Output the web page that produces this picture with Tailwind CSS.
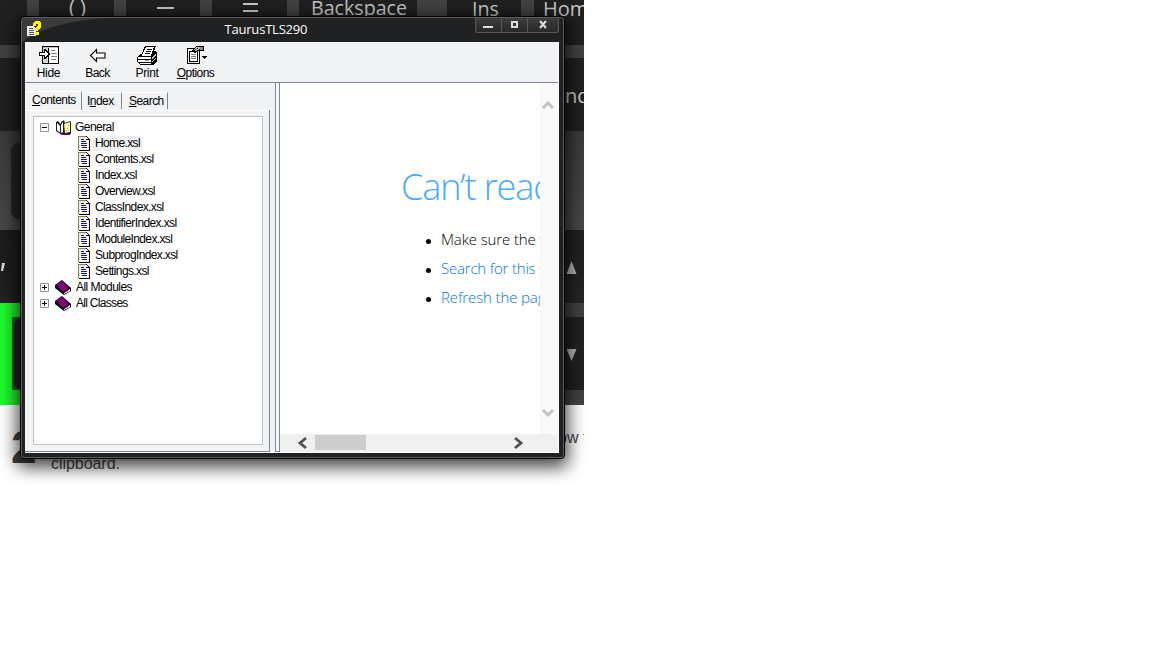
<!DOCTYPE html>
<html lang="en">
<head>
<meta charset="utf-8">
<title>TaurusTLS290</title>
<script src="https://cdn.jsdelivr.net/npm/@tailwindcss/browser@4"></script>
</head>
<body class="w-[1152px] h-[648px] overflow-hidden bg-white relative">
<svg width="0" height="0" class="absolute">
  <defs>
    <symbol id="doc" viewBox="0 0 12 15">
      <g shape-rendering="crispEdges">
      <path d="M0 0h9l3 3v12H0z" fill="#fffef0"/>
      <path d="M0 0h8v1H1v13H0z" fill="#808080"/>
      <path d="M8 0h1v1h1v1h1v1h1v12H1v-1h10V4H8z" fill="#000"/>
      <path d="M2 1h1v1H2zM4 1h1v1H4zM6 1h1v1H6zM1 3h1v1H1zM1 6h1v1H1zM1 9h1v1H1zM1 12h1v1H1zM10 5h1v1h-1zM10 8h1v1h-1zM10 11h1v1h-1z" fill="#eee05a"/>
      <path d="M3 3h3v1H3zM3 5h5v1H3zM3 7h6v1H3zM3 9h6v1H3zM4 11h5v1H4z" fill="#0000d8"/>
      <path d="M8 1h1v1h1v1H8z" fill="#fff"/>
      </g>
    </symbol>
    <symbol id="book" viewBox="0 0 16 15">
      <path d="M0 5L7 0l9 8v3l-7 4-9-7z" fill="#000"/>
      <path d="M1 5l6-4 7 7-6 4z" fill="#800080"/>
      <path d="M9 13l6-4v2l-6 3z" fill="#fff"/>
      <path d="M9 13.500l5-3" stroke="#999" stroke-width=".6"/>
    </symbol>
    <symbol id="plus" viewBox="0 0 9 9"><path d="M.5.5h8v8h-8z" fill="#fff" stroke="#919191"/><path d="M2 4h5v1H2zM4 2h1v5H4z"/></symbol>
    <symbol id="minus" viewBox="0 0 9 9"><path d="M.5.5h8v8h-8z" fill="#fff" stroke="#919191"/><path d="M2 4h5v1H2z"/></symbol>
  </defs>
</svg>

<!-- Page behind the window -->
<div class="absolute left-0 top-0 w-[584px] h-[648px] overflow-hidden">
  <svg class="absolute left-0 top-0" width="584" height="405" viewBox="0 0 584 405">
    <defs>
      <linearGradient id="key" x1="0" x2="1" y1="0" y2="1"><stop offset="0" stop-color="#1c1c1c"/><stop offset="1" stop-color="#252525"/></linearGradient>
      <linearGradient id="gap" x1="0" x2="0" y1="0" y2="1"><stop offset="0" stop-color="#3a3a3a"/><stop offset="1" stop-color="#484848"/></linearGradient>
    </defs>
    <rect width="584" height="405" fill="#424242"/>
    <path d="M0 0h27v45H0zM39 0h75v45H39zM126 0h74v45h-74zM212 0h75v45h-75zM299 0h118v45H299zM447 0h74v45h-74zM534 0h50v45h-50zM0 58h584v73H0z" fill="#202020"/>
    <rect y="131" width="584" height="99" fill="url(#gap)"/>
    <rect x="11" y="143" width="40" height="76" rx="8" fill="#232323"/>
    <rect y="230" width="584" height="73" fill="url(#key)"/>
    <rect x="500" y="317" width="84" height="73" fill="#222"/>
    <rect y="303" width="40" height="102" fill="#1ef92d"/>
    <rect x="12" y="317" width="40" height="73" fill="#225f2a"/>
    <rect x="14" y="319" width="40" height="70" rx="6" fill="#232626"/>
    <path d="M571.500 261l5 13h-10zM571.500 361l-5-12h10z" fill="#b5b5b5"/>
    <g fill="#c8c8c8" font-family="Open Sans, sans-serif" font-size="20">
      <text x="69" y="14" textLength="17">()</text>
      <text x="311" y="15" textLength="96" lengthAdjust="spacingAndGlyphs">Backspace</text>
      <text x="472" y="16" textLength="27" lengthAdjust="spacingAndGlyphs">Ins</text>
      <text x="543" y="16">Home</text>
      <text x="565" y="103">nd</text>
      <path d="M157 7h17v2h-17zM243 3h15v2h-15zM243 10h15v2h-15z"/>
    </g>
    <path d="M2 263h3l-2 8H1z" fill="#ddd"/>
  </svg>
  <div class="absolute left-[11px] top-[421px] font-['Liberation_Sans'] font-bold text-[46px] leading-[52px] text-[#444]">2</div>
  <div class="absolute left-[51px] top-[454px] font-['Liberation_Sans'] text-[16px] leading-[20px] text-[#444] tracking-[-0.05px]">clipboard.</div>
  <div class="absolute left-[558px] top-[428px] font-['Liberation_Sans'] text-[16px] leading-[20px] text-[#444] whitespace-nowrap">ow t</div>
</div>

<!-- Help window -->
<div class="absolute left-[20px] top-[16px] w-[545px] h-[443px] rounded-[4px] bg-[#202122] border border-black shadow-[0_5px_17px_3px_rgba(0,0,0,0.75)]">
  <div class="w-full h-full rounded-[3px] border border-[#5c5c5c] flex flex-col px-[3px] pb-[4px] relative overflow-hidden">
    <svg class="absolute left-0 top-0" width="90" height="24"><path d="M0 0H90Q30 2 0 24z" fill="#3b3b3b"/></svg>
    <div class="h-[24px] shrink-0 relative flex justify-center">
      <svg class="absolute left-[2px] top-[3px]" width="15" height="16" viewBox="0 0 15 16" shape-rendering="crispEdges">
        <path d="M0 5h6l3 3v7H0z" fill="#eee"/><path d="M2 7h4v1H2zM2 9h5v1H2zM2 11h5v1H2zM2 13h5v1H2z" fill="#555"/>
        <path d="M6 4V2l2-2h4l2 2v4l-3 3v1H8V7l3-2V3H9v2H6z" fill="#ffff00"/><path d="M8 11h4v3H8z" fill="#ffff00"/>
      </svg>
      <div class="-ml-[51px] mt-px font-['Open_Sans'] text-[13px] leading-[21px] text-white w-[85px] whitespace-nowrap tracking-[-0.2px]">TaurusTLS290</div>
      <div class="absolute right-[1px] -top-[2px] h-[17px] w-[84px] flex border border-t-0 border-[#5a5a5a] rounded-b-[3px] bg-linear-to-b from-[#404040] to-[#292929]">
        <span class="w-[26px] border-r border-[#5a5a5a] flex"><svg width="25" height="16"><path d="M7 10h10v2H7z" fill="#ddd"/></svg></span>
        <span class="w-[26px] border-r border-[#5a5a5a] flex"><svg width="25" height="16"><path d="M10 6h5v5h-5z" fill="none" stroke="#ddd" stroke-width="2"/></svg></span>
        <span class="flex"><svg width="30" height="16"><path d="M12 5l6 7M18 5l-6 7" stroke="#ddd" stroke-width="2"/></svg></span>
      </div>
    </div>

    <div class="flex-1 min-h-0 w-[534px] bg-[#f1f3f5] flex flex-col border-b border-r border-[#fff] text-black font-['Liberation_Sans'] text-[12px] tracking-[-0.55px] -mr-px">
      <!-- Toolbar -->
      <div class="h-[41px] shrink-0 border-b border-[#7b8792] flex pt-[3px]">
        <button class="w-[47px] flex flex-col items-center">
          <svg width="22" height="20" viewBox="38 45 22 20" shape-rendering="crispEdges">
            <path d="M42 46h17v18H42z"/><path d="M43 48h5v15h-5z" fill="#d5d5d5"/><path d="M49 48h9v15h-9z" fill="#fff"/><path d="M43 47h15v1H43z" fill="#c0c0c0"/>
            <path d="M51 50h4v1h-4zM51 53h6v1h-6zM51 56h6v1h-6zM51 59h5v1h-5z" fill="#808080"/>
            <path d="M39 52h5v-3h1l5 5-5 5h-1v-3h-5z"/><path d="M40 53h5v-2l3 3-3 3v-2h-5z" fill="#fff"/>
          </svg>
          <span class="leading-[14px] mt-px tracking-[-0.3px]">Hide</span>
        </button>
        <button class="w-[51px] flex flex-col items-center">
          <svg width="22" height="20" viewBox="87 45 22 20"><path d="M90.500 55.500l6-6v3.500h8.500v5h-8.500v3.500z" fill="#fff" stroke="#000" stroke-width="1.100"/></svg>
          <span class="leading-[14px] mt-px">Back</span>
        </button>
        <button class="w-[48px] flex flex-col items-center">
          <svg width="22" height="20" viewBox="136 45 22 20" shape-rendering="crispEdges">
            <path d="M141 55l4-9h11l-3 9z"/><path d="M142 55l4-8h8l-3 8z" fill="#fff"/>
            <path d="M147 49h5v1h-5zM146 51h5v1h-5zM145 53h5v1h-5z"/>
            <path d="M137 57l3-3h2v2h9l2-5h2l2 2v8l-4 4h-13l-3-3z"/>
            <path d="M138 57h13v2h-13zM138 60h13v2h-13zM140 63h11v1h-11z" fill="#fff"/><path d="M145 60h4v1h-4z" fill="#888"/>
            <path d="M152 57l4-4v2l-4 4zM152 61l4-4v1l-4 4z" fill="#ccc"/>
          </svg>
          <span class="leading-[14px] mt-px tracking-[-0.35px]">Print</span>
        </button>
        <button class="w-[49px] flex flex-col items-center">
          <svg width="22" height="20" viewBox="184 45 22 20" shape-rendering="crispEdges">
            <path d="M186 48h13v16h-13z"/><path d="M187 49h11v14h-11z" fill="#eee"/><path d="M188 51h9v11h-9z"/><path d="M189 52h7v9h-7z" fill="#fff"/>
            <path d="M190 54h5v1h-5zM190 56h5v1h-5zM190 58h5v1h-5z" fill="#777"/>
            <path d="M190 51l5-5h8v5h-6l-3 2z"/><path d="M192 50l3-3h4v2l-4 2z" fill="#bbb"/><path d="M199 47h3v3h-3z" fill="#888"/><path d="M196 48h1v1h-1zM194 49h1v1h-1z"/>
            <path d="M201 56h5v1h-1v1h-1v1h-1v-1h-1v-1h-1z"/>
          </svg>
          <span class="leading-[14px] mt-px"><u>O</u>ptions</span>
        </button>
      </div>
      <div class="flex-1 min-h-0 flex">
        <!-- Navigation pane -->
        <div class="w-[245px] flex flex-col border-b border-[#7b8792]">
          <div class="h-[27px] shrink-0 flex items-end">
            <div class="w-[57px] h-[19px] border-t border-l border-white border-r border-r-[#7b8792] rounded-tl-[2px] pl-[6px] leading-[17px]"><u>C</u>ontents</div>
            <div class="w-[40px] h-[17px] border-t border-t-white border-r border-r-[#7b8792] pl-[5px] leading-[17px] mb-px">I<u>n</u>dex</div>
            <div class="w-[46px] h-[17px] border-t border-t-white border-r border-r-[#7b8792] pl-[7px] leading-[17px] mb-px"><u>S</u>earch</div>
          </div>
          <div class="flex-1 min-h-0 pl-[8px] pr-[6px] pt-[6px] pb-[6px] border-r border-[#7b8792] shadow-[inset_0_1px_0_#fff]">
            <div class="h-full w-[230px] bg-white border border-[#bfc1c3] pt-[2px]">
              <div class="h-[16px] flex items-center pl-[6px]"><svg width="9" height="9"><use href="#minus"/></svg>
                <svg class="ml-[7px]" width="16" height="15" viewBox="0 0 16 15"><path d="M0 2l2-1 3 3V2l3-2 1 3 5-2 1 1v12l-6 1H6l-6-4z" fill="#222"/><path d="M1 3l3 3v7l-3-3z" fill="#fff"/><path d="M5 5l2-3v10l-1 1-1-1z" fill="#fff"/><path d="M8 4l6-2v10l-5 1z" fill="#fffbc0"/><path d="M9 5h1v1H9zM12 4h1v2h-1zM11 7h1v2h-1zM9 10h2v1H9zM13 8v3h-1z" fill="#e8d800"/><path d="M1 11l5 3h8v1H7l-6-3z" fill="#800080"/></svg>
                <span class="ml-[3px]">General</span></div>
              <div class="flex flex-col pl-[44px] tracking-[-0.63px]">
                <div class="h-[16px] flex items-center gap-[3px]"><svg width="12" height="15"><use href="#doc"/></svg><span class="bg-[#f0f1f3] px-[2px] leading-[15px]">Home.xsl</span></div>
                <div class="h-[16px] flex items-center gap-[5px]"><svg width="12" height="15"><use href="#doc"/></svg><span>Contents.xsl</span></div>
                <div class="h-[16px] flex items-center gap-[5px]"><svg width="12" height="15"><use href="#doc"/></svg><span>Index.xsl</span></div>
                <div class="h-[16px] flex items-center gap-[5px]"><svg width="12" height="15"><use href="#doc"/></svg><span>Overview.xsl</span></div>
                <div class="h-[16px] flex items-center gap-[5px]"><svg width="12" height="15"><use href="#doc"/></svg><span>ClassIndex.xsl</span></div>
                <div class="h-[16px] flex items-center gap-[5px]"><svg width="12" height="15"><use href="#doc"/></svg><span>IdentifierIndex.xsl</span></div>
                <div class="h-[16px] flex items-center gap-[5px]"><svg width="12" height="15"><use href="#doc"/></svg><span>ModuleIndex.xsl</span></div>
                <div class="h-[16px] flex items-center gap-[5px]"><svg width="12" height="15"><use href="#doc"/></svg><span>SubprogIndex.xsl</span></div>
                <div class="h-[16px] flex items-center gap-[5px]"><svg width="12" height="15"><use href="#doc"/></svg><span>Settings.xsl</span></div>
              </div>
              <div class="h-[16px] flex items-center pl-[6px]"><svg width="9" height="9"><use href="#plus"/></svg><svg class="ml-[6px]" width="16" height="15"><use href="#book"/></svg><span class="ml-[5px]">All Modules</span></div>
              <div class="h-[16px] flex items-center pl-[6px]"><svg width="9" height="9"><use href="#plus"/></svg><svg class="ml-[6px]" width="16" height="15"><use href="#book"/></svg><span class="ml-[5px] tracking-[-0.7px]">All Classes</span></div>
            </div>
          </div>
        </div>
        <!-- Splitter -->
        <div class="w-[5px] ml-[5px] border-x border-b border-[#7b8792] bg-[#f6f7f8]"></div>
        <!-- Document pane -->
        <div class="flex-1 min-w-0 flex flex-col">
          <div class="flex-1 min-h-0 flex">
            <div class="w-[260px] bg-white overflow-hidden whitespace-nowrap font-['Open_Sans'] font-light tracking-normal">
              <h1 class="mt-[78px] ml-[121px] text-[36px] leading-[52px] text-[#4aa9f5] tracking-[-1.1px]">Can’t reach this page</h1>
              <ul class="mt-[12px] ml-[161px] text-[15px] leading-[29px] text-black tracking-[-0.12px]">
                <li class="flex items-center -ml-[15px]"><i class="shrink-0 w-[5px] h-[5px] rounded-full bg-black mt-[3px] mr-[10px]"></i><span>Make sure the web address</span></li>
                <li class="flex items-center -ml-[15px]"><i class="shrink-0 w-[5px] h-[5px] rounded-full bg-black mt-[3px] mr-[10px]"></i><span class="text-[#0078d7] tracking-[-0.2px]">Search for this site</span></li>
                <li class="flex items-center -ml-[15px]"><i class="shrink-0 w-[5px] h-[5px] rounded-full bg-black mt-[3px] mr-[10px]"></i><span class="text-[#0078d7]">Refresh the page</span></li>
              </ul>
            </div>
            <div class="flex-1 bg-[#f9f9f9] flex flex-col justify-between items-start pt-[16px] pb-[15px] pl-px">
              <svg width="14" height="12"><path d="M2 9l5-5 5 5" fill="none" stroke="#c2c2c2" stroke-width="3"/></svg>
              <svg width="14" height="12"><path d="M2 3l5 5 5-5" fill="none" stroke="#c2c2c2" stroke-width="3"/></svg>
            </div>
          </div>
          <div class="h-[18px] bg-[#f0f0f0] flex items-center pl-[17px] pb-px">
            <svg width="12" height="14"><path d="M9 2L3 7l6 5" fill="none" stroke="#505050" stroke-width="2.800"/></svg>
            <div class="ml-[6px] w-[51px] h-[15px] bg-[#cdcdcd]"></div>
            <svg class="ml-[146px]" width="12" height="14"><path d="M3 2l6 5-6 5" fill="none" stroke="#505050" stroke-width="2.800"/></svg>
          </div>
        </div>
      </div>
    </div>
  </div>
</div>
</body>
</html>
